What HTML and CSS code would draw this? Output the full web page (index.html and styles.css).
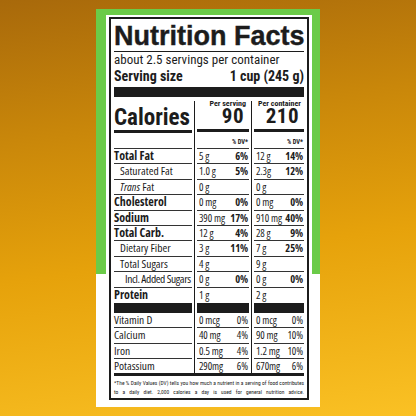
FILE: index.html
```html
<!DOCTYPE html>
<html lang="en">
<head>
    <meta charset="UTF-8">
    <meta name="viewport" content="width=device-width, initial-scale=1.0">
    <title>Nutrition Facts</title>
    <link rel="stylesheet" href="styles.css">
</head>
<body>
    <!-- Green panel with the label -->
    <div class="panel">
        <div class="panel-inner">
            <div class="label">
                <h1 class="title">Nutrition Facts</h1>
                <div class="servings">about 2.5 servings per container</div>
                <div class="serving-size"><span>Serving size</span><span>1 cup (245 g)</span></div>
                <div class="bar-thick"></div>

                <div class="facts">
                    <div class="row head">
                        <div class="cal">Calories</div>
                        <div class="amount"><small>Per serving</small><strong>90</strong></div>
                        <div class="amount"><small>Per container</small><strong>210</strong></div>
                    </div>
                    <div class="row dv">
                        <div></div>
                        <div><span>% DV*</span></div>
                        <div><span>% DV*</span></div>
                    </div>

                    <div class="row">
                        <div class="name b">Total Fat</div>
                        <div><span>5 g</span><b>6%</b></div>
                        <div><span>12 g</span><b>14%</b></div>
                    </div>
                    <div class="row">
                        <div class="name in1">Saturated Fat</div>
                        <div><span>1.0 g</span><b>5%</b></div>
                        <div><span>2.3g</span><b>12%</b></div>
                    </div>
                    <div class="row">
                        <div class="name in1"><span><i>Trans</i> Fat</span></div>
                        <div><span>0 g</span></div>
                        <div><span>0 g</span></div>
                    </div>
                    <div class="row">
                        <div class="name b">Cholesterol</div>
                        <div><span>0 mg</span><b>0%</b></div>
                        <div><span>0 mg</span><b>0%</b></div>
                    </div>
                    <div class="row">
                        <div class="name b">Sodium</div>
                        <div><span>390 mg</span><b>17%</b></div>
                        <div><span>910 mg</span><b>40%</b></div>
                    </div>
                    <div class="row">
                        <div class="name b">Total Carb.</div>
                        <div><span>12 g</span><b>4%</b></div>
                        <div><span>28 g</span><b>9%</b></div>
                    </div>
                    <div class="row">
                        <div class="name in1">Dietary Fiber</div>
                        <div><span>3 g</span><b>11%</b></div>
                        <div><span>7 g</span><b>25%</b></div>
                    </div>
                    <div class="row">
                        <div class="name in1">Total Sugars</div>
                        <div><span>4 g</span></div>
                        <div><span>9 g</span></div>
                    </div>
                    <div class="row">
                        <div class="name in2">Incl. Added Sugars</div>
                        <div><span>0 g</span><b>0%</b></div>
                        <div><span>0 g</span><b>0%</b></div>
                    </div>
                    <div class="row protein">
                        <div class="name b">Protein</div>
                        <div><span>1 g</span></div>
                        <div><span>2 g</span></div>
                    </div>
                    <div class="row black">
                        <div></div>
                        <div></div>
                        <div></div>
                    </div>

                    <div class="row">
                        <div class="name">Vitamin D</div>
                        <div><span>0 mcg</span><span>0%</span></div>
                        <div><span>0 mcg</span><span>0%</span></div>
                    </div>
                    <div class="row">
                        <div class="name">Calcium</div>
                        <div><span>40 mg</span><span>4%</span></div>
                        <div><span>90 mg</span><span>10%</span></div>
                    </div>
                    <div class="row">
                        <div class="name">Iron</div>
                        <div><span>0.5 mg</span><span>4%</span></div>
                        <div><span>1.2 mg</span><span>10%</span></div>
                    </div>
                    <div class="row last">
                        <div class="name">Potassium</div>
                        <div><span>290mg</span><span>6%</span></div>
                        <div><span>670mg</span><span>6%</span></div>
                    </div>
                </div>

                <div class="rule"></div>
                <p class="note">*The % Daily Values (DV) tells you how much a nutrient in a serving of food contributes<br>to a daily diet. 2,000 calories a day is used for general nutrition advice.</p>
            </div>
        </div>
    </div>
</body>
</html>
```

FILE: styles.css
```css
body {
    margin: 0;
    width: 416px;
    height: 416px;
    box-sizing: border-box;
    padding: 9px 0 0 96px;
    overflow: hidden;
    background: linear-gradient(172deg, #a8690b 0%, #c9870a 30%, #e6a20b 60%, #fac124 100%);
    font-family: "Roboto Condensed", "Liberation Sans", Arial, sans-serif;
    color: #1c1c1c;
}

/* Panel: green top, white bottom */
.panel {
    width: 224px;
    height: 398px;
    box-sizing: border-box;
    padding: 6px 8px 0 10px;
    background: linear-gradient(to bottom, #6bcb48 265px, #ffffff 265px);
}

.panel-inner {
    height: 100%;
    box-sizing: border-box;
    padding: 2px 3px 7px;
    background: #ffffff;
}

.label {
    height: 100%;
    box-sizing: border-box;
    border: 2px solid #1c1c1c;
    padding: 4px 3px 0;
}

.title {
    margin: 0;
    padding-bottom: 1px;
    border-bottom: 1px solid #1c1c1c;
    font: bold 27px/27px "Liberation Sans", Arial, sans-serif;
    -webkit-text-stroke: 0.4px #1c1c1c;
    white-space: nowrap;
}

.servings {
    font-size: 13px;
    line-height: 16px;
    white-space: nowrap;
}

.serving-size {
    display: flex;
    justify-content: space-between;
    font-size: 14px;
    line-height: 16px;
    font-weight: bold;
}

.bar-thick {
    height: 10px;
    margin-top: 3px;
    background: #1c1c1c;
}

/* Fact rows, with the two vertical rules drawn as a background */
.facts {
    margin-top: 4px;
    background: linear-gradient(to right, transparent 80px, #1c1c1c 80px 81px, transparent 81px 137px, #1c1c1c 137px 138px, transparent 138px);
}

.row {
    display: grid;
    grid-template-columns: 78px 52px 50px;
    column-gap: 5px;
}

.row > div {
    height: 14.4px;
    border-bottom: 1px solid #333;
    display: flex;
    justify-content: space-between;
    padding: 0 1px 0 2px;
    font-family: "Open Sans", "Roboto Condensed", sans-serif;
    font-stretch: 75%;
    font-weight: 500;
    font-size: 10.5px;
    line-height: 14.4px;
    letter-spacing: -0.1px;
    white-space: nowrap;
}

.row > div.name {
    padding: 0;
    font-size: 11.5px;
    letter-spacing: 0;
}

.row > div.b {
    font-weight: bold;
    font-size: 12px;
}

.row > div.in1 {
    padding-left: 6px;
}

.row > div.in2 {
    padding-left: 11px;
    letter-spacing: -0.4px;
}

.row b {
    font-weight: bold;
}

/* Calories header */
.row.head > div {
    height: 28px;
    border-bottom: 3px solid #1c1c1c;
    font-family: "Roboto Condensed", sans-serif;
    font-stretch: normal;
    letter-spacing: 0;
}

.row > div.cal {
    padding: 0 0 1px;
    align-items: flex-end;
    font-size: 23px;
    line-height: 23px;
    font-weight: bold;
}

.row > div.amount {
    flex-direction: column;
    justify-content: flex-start;
    align-items: flex-end;
    padding: 0;
}

.amount small {
    padding-right: 3px;
    font-size: 8px;
    line-height: 6px;
    font-weight: bold;
}

.amount strong {
    padding-right: 5px;
    font-size: 21px;
    line-height: 19px;
    letter-spacing: 0.5px;
}

.row.dv > div {
    height: 15px;
    justify-content: flex-end;
    align-items: flex-end;
    font-family: "Roboto Condensed", sans-serif;
    font-stretch: normal;
    font-size: 6.5px;
    line-height: 11px;
    font-weight: bold;
    letter-spacing: 0;
}

.row.protein > div {
    height: 15.4px;
    border-bottom: none;
}

.row.black > div {
    height: 10px;
    border: none;
    background: #1c1c1c;
}

.row.last > div {
    border-bottom: none;
}

.rule {
    height: 3px;
    background: #1c1c1c;
}

.note {
    margin: 3px 0 0;
    font-size: 5.5px;
    line-height: 8.5px;
    white-space: nowrap;
    text-align: justify;
    text-align-last: justify;
}
```
